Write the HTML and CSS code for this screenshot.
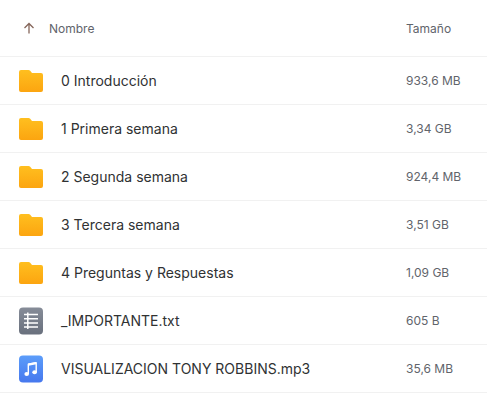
FILE: index.html
```html
<!DOCTYPE html>
<html lang="es">
<head>
<meta charset="utf-8">
<title>Archivos</title>
<link rel="stylesheet" href="styles.css">
</head>
<body>
<svg class="defs" width="0" height="0" aria-hidden="true">
  <defs>
    <linearGradient id="gold" x1="0" y1="0" x2="0" y2="1"><stop offset="0" stop-color="#ffbf1f"/><stop offset="1" stop-color="#fca510"/></linearGradient>
    <linearGradient id="gray" x1="0" y1="0" x2="0" y2="1"><stop offset="0" stop-color="#868c98"/><stop offset="1" stop-color="#69707d"/></linearGradient>
    <linearGradient id="blue" x1="0" y1="0" x2="0" y2="1"><stop offset="0" stop-color="#5c9dfa"/><stop offset="1" stop-color="#4678ee"/></linearGradient>
    <symbol id="folder" viewBox="0 0 24 28"><path fill="url(#gold)" d="M2 3h7.500q1 0 1.700.7L13 6h9q2 0 2 2v15q0 2-2 2H2q-2 0-2-2V5q0-2 2-2z"/></symbol>
  </defs>
</svg>
<table class="files">
  <thead>
    <tr><th class="name" scope="col"><button class="sort" type="button"><svg class="arrow" viewBox="0 0 12 12"><path d="M6 11.500V1.500M1.500 6 6 1.500 10.500 6"/></svg>Nombre</button></th><th class="size" scope="col">Tamaño</th></tr>
  </thead>
  <tbody>
    <tr><td class="name"><div class="entry"><svg class="icon"><use href="#folder"/></svg><span>0 Introducción</span></div></td><td class="size">933,6 MB</td></tr>
    <tr><td class="name"><div class="entry"><svg class="icon"><use href="#folder"/></svg><span>1 Primera semana</span></div></td><td class="size">3,34 GB</td></tr>
    <tr><td class="name"><div class="entry"><svg class="icon"><use href="#folder"/></svg><span>2 Segunda semana</span></div></td><td class="size">924,4 MB</td></tr>
    <tr><td class="name"><div class="entry"><svg class="icon"><use href="#folder"/></svg><span>3 Tercera semana</span></div></td><td class="size">3,51 GB</td></tr>
    <tr><td class="name"><div class="entry"><svg class="icon"><use href="#folder"/></svg><span>4 Preguntas y Respuestas</span></div></td><td class="size">1,09 GB</td></tr>
    <tr><td class="name"><div class="entry"><svg class="icon" viewBox="0 0 24 28"><rect y="0.500" width="24" height="27" rx="4" fill="url(#gray)"/><path d="M5 7.500h14M5 11.700h14M5 15.900h14M5 20.100h14M8.800 5.500v16.500" fill="none" stroke="#fff" stroke-width="1.500"/></svg><span>_IMPORTANTE.txt</span></div></td><td class="size">605 B</td></tr>
    <tr><td class="name"><div class="entry"><svg class="icon" viewBox="0 0 24 28"><rect y="0.500" width="24" height="27" rx="4" fill="url(#blue)"/><path d="M9.300 19V9.200l7.900-1.500v9.500" fill="none" stroke="#fff" stroke-width="1.400" stroke-linejoin="round"/><path d="M9.300 9.600l7.900-1.500" stroke="#fff" stroke-width="2.400"/><ellipse cx="7.700" cy="19" rx="2.300" ry="2" fill="#fff"/><ellipse cx="15.600" cy="17.300" rx="2.300" ry="2" fill="#fff"/></svg><span>VISUALIZACION TONY ROBBINS.mp3</span></div></td><td class="size">35,6 MB</td></tr>
  </tbody>
</table>
</body>
</html>
```
FILE: styles.css
```css
body {
  margin: 0;
  background: #fff;
  color: #303233;
  font-family: Inter, sans-serif;
  font-size: 14px;
}
.defs { position: absolute; }
.files {
  width: 100%;
  border-collapse: collapse;
  table-layout: fixed;
}
.files th, .files td {
  height: 47px;
  padding: 0;
  border-bottom: 1px solid #f1f1f1;
  text-align: left;
  font-weight: 400;
}
.files th { height: 56px; color: #61646b; font-size: 12px; }
.files .size { width: 81px; color: #61646b; font-size: 12px; }
.sort {
  display: flex;
  align-items: center;
  gap: 14px;
  padding: 0 0 0 23px;
  border: 0;
  background: none;
  color: inherit;
  font: inherit;
}
.arrow {
  width: 12px;
  height: 12px;
  fill: none;
  stroke: #85665a;
  stroke-width: 1.3;
}
.entry {
  display: flex;
  align-items: center;
  gap: 18px;
  padding-left: 19px;
}
.icon { width: 24px; height: 28px; flex: none; }
```
